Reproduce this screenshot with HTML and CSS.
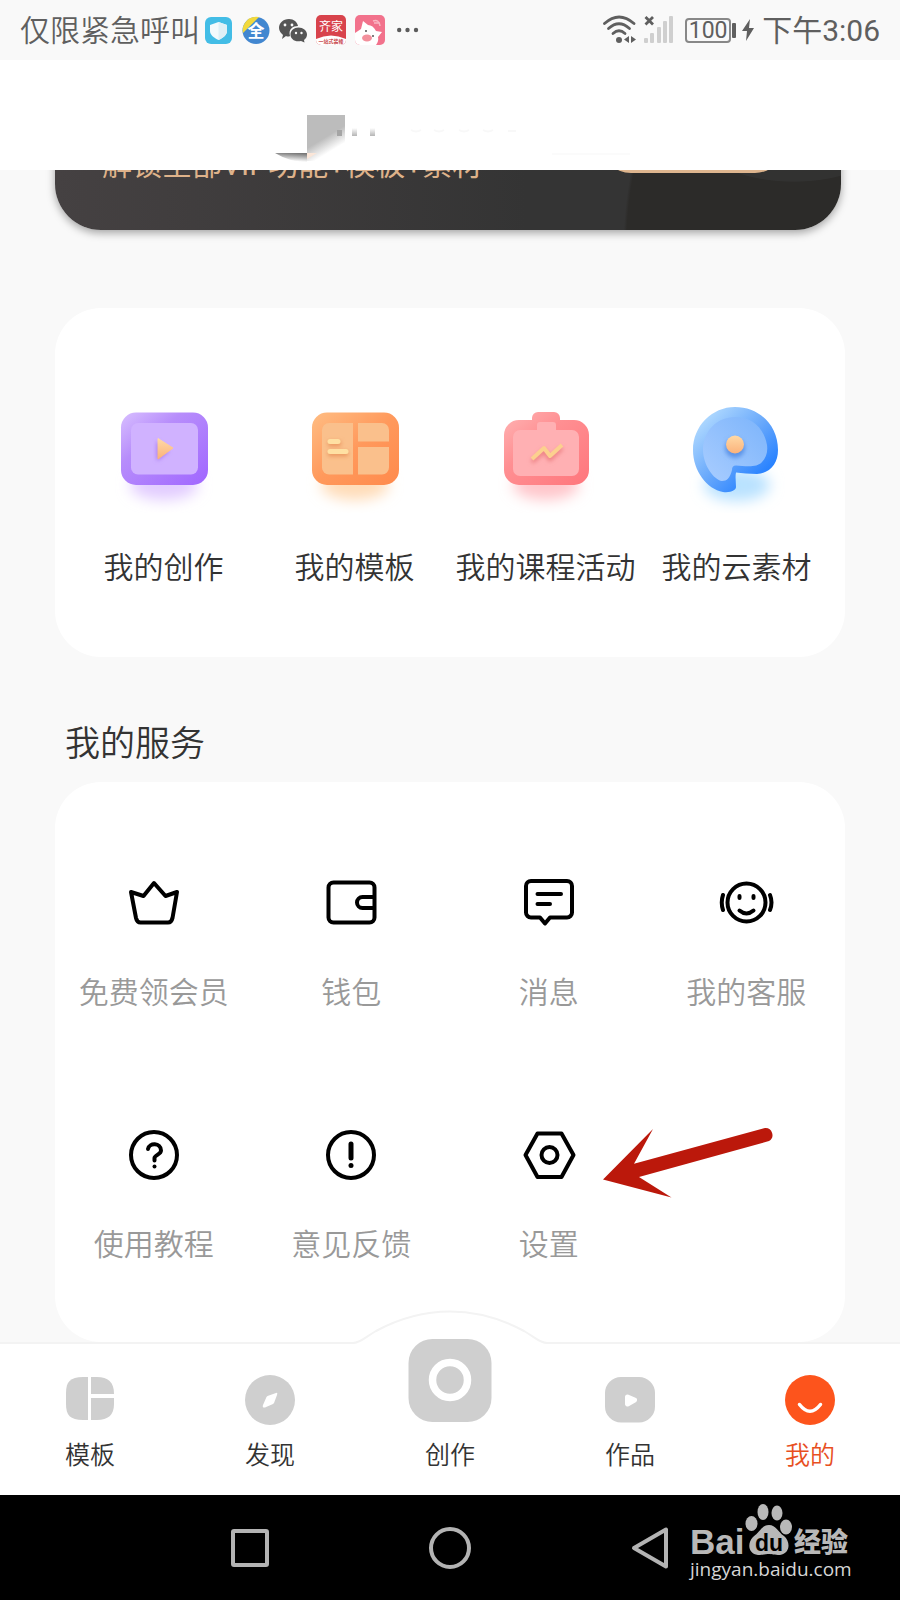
FILE: index.html
```html
<!DOCTYPE html>
<html lang="zh-CN">
<head>
    <meta charset="UTF-8">
    <meta name="viewport" content="width=device-width, initial-scale=1.0">
    <title>我的</title>
    <link rel="stylesheet" href="styles.css">
</head>
<body>
    <div class="status-bar">
        <span class="carrier">仅限紧急呼叫</span>
        <div class="notices">
            <svg width="28" height="30" viewBox="0 0 28 30">
                <rect x="0" y="2" width="27" height="27" rx="6" fill="#43bde6"/>
                <path d="M13.500 7 L22 10 V16 C22 20 18 23 13.500 25 C9 23 5 20 5 16 V10Z" fill="#f4fafc"/>
                <path d="M13.500 7 L22 10 V16 C22 20 18 23 13.500 25Z" fill="#dff0f6"/>
            </svg>
            <svg width="28" height="30" viewBox="0 0 28 30">
                <circle cx="14" cy="15.500" r="13.500" fill="#4287d0"/>
                <path d="M1 18 A13.500 13.500 0 0 1 17 2Z" fill="#f2d93c"/>
                <text x="14" y="22" class="icon-text" font-size="17" fill="#fff">全</text>
            </svg>
            <svg width="28" height="30" viewBox="0 0 28 30">
                <path d="M10 4 C4 4 0 8 0 13 C0 16 2 18 4 20 L3 24 L7 21 Q9 22 11 21 C9 14 14 11 19 11 C18 7 15 4 10 4Z" fill="#555"/>
                <path d="M19.500 12.500 C15 12.500 11.500 15.500 11.500 19.500 C11.500 24 16 27.500 22 26 L25.500 27.500 L25 25 C27 23.500 28 21.500 28 19.500 C28 15.500 24 12.500 19.500 12.500Z" fill="#555"/>
                <g fill="#f9f9f9"><circle cx="6" cy="10" r="1.400"/><circle cx="13" cy="10" r="1.400"/><circle cx="17" cy="18" r="1.200"/><circle cx="22.500" cy="18" r="1.200"/></g>
            </svg>
            <svg width="30" height="30" viewBox="0 0 30 30">
                <rect width="30" height="30" rx="5" fill="#d8434c"/>
                <path d="M0 24 Q15 17 30 24 V25 a5 5 0 0 1 -5 5 H5 a5 5 0 0 1 -5 -5Z" fill="#fff"/>
                <text x="15" y="16" class="icon-text thin" font-size="12" fill="#fff">齐家</text>
                <text x="15" y="28" class="icon-text" font-size="5" fill="#c63c44">一站式装修</text>
            </svg>
            <svg width="30" height="30" viewBox="0 0 30 30">
                <rect width="30" height="30" rx="5" fill="#f2728c"/>
                <path d="M0 18 L6 14 L8 6 L13 10 Q18 10 21 16 L27 17 L23 22 Q24 26 21 30 H5 a5 5 0 0 1 -5 -5Z" fill="#fff"/>
                <ellipse cx="12" cy="23" rx="5" ry="3.500" fill="#f3909c"/>
                <g fill="#555"><circle cx="11" cy="16" r="1"/><circle cx="18" cy="21" r="1"/></g>
                <path d="M18 6 Q24 4 25 11 M19 8 L25 8" stroke="#f9b8c4" stroke-width="1.500" fill="none"/>
            </svg>
            <svg class="more" width="22" height="30" viewBox="0 0 22 30">
                <g fill="#5c5c5c"><circle cx="2.200" cy="15" r="2.200"/><circle cx="10.500" cy="15" r="2.200"/><circle cx="19" cy="15" r="2.200"/></g>
            </svg>
        </div>
        <div class="signals">
            <svg width="70" height="30" viewBox="0 0 70 30">
                <g fill="none" stroke="#5f5f5f" stroke-width="2.800" stroke-linecap="round">
                    <path d="M1.500 8.500 Q16 -4.500 31 8.500"/>
                    <path d="M5.500 13.500 Q16 4 26.500 13.500"/>
                    <path d="M10 18.500 Q16 13 22 18.500"/>
                </g>
                <circle cx="16" cy="25" r="3" fill="#5f5f5f"/>
                <path d="M26 21 V28 L21 24.500Z M28 21 L33 24.500 L28 28Z" fill="#5f5f5f"/>
                <path d="M42.500 2 L50 9.500 M50 2 L42.500 9.500" stroke="#5f5f5f" stroke-width="2.800"/>
                <g fill="#cfcfcf"><rect x="41" y="23" width="4" height="5" rx="1"/><rect x="47" y="18" width="4" height="10" rx="1"/><rect x="54" y="12" width="4" height="16" rx="1"/><rect x="60" y="6" width="4" height="22" rx="1"/><rect x="66" y="1" width="4" height="27" rx="1"/></g>
            </svg>
            <span class="battery">100</span>
            <svg class="bolt" width="12" height="24" viewBox="0 0 12 24">
                <path d="M8 1 L0 13 H5 L4 23 L12 10 H7Z" fill="#5f5f5f"/>
            </svg>
            <span class="clock">下午3:06</span>
        </div>
    </div>

    <header>
        <svg width="360" height="110" viewBox="0 0 360 110">
            <defs>
                <linearGradient id="fold" x1="0.2" y1="0" x2="0.7" y2="1">
                    <stop offset="0" stop-color="#bcbcbc"/>
                    <stop offset=".5" stop-color="#bcbcbc"/>
                    <stop offset=".8" stop-color="#fff"/>
                </linearGradient>
                <linearGradient id="curl" x1="0.6" y1="0" x2="0.4" y2="1">
                    <stop offset="0" stop-color="#777"/>
                    <stop offset=".8" stop-color="#fff"/>
                </linearGradient>
                <linearGradient id="stub" x1="0" y1="0" x2="0" y2="1">
                    <stop offset="0" stop-color="#fff"/>
                    <stop offset="1" stop-color="#b5b5b5"/>
                </linearGradient>
            </defs>
            <rect x="37" y="55" width="38" height="46" fill="url(#fold)"/>
            <path d="M5 93 H37 V103 Q18 101 5 93Z" fill="url(#curl)"/>
            <path d="M37 93 H47 L37 99Z" fill="#fbe6d8"/>
            <path d="M67 70 H72 V76 H67Z" fill="#a5a5a5"/>
            <g fill="url(#stub)"><rect x="82" y="68" width="5" height="8"/><rect x="100" y="68" width="5" height="8"/></g>
            <path d="M141 70 q5 3 10 0 M164 70 q5 3 10 0 M189 70 q5 3 10 0 M213 70 q5 3 10 0 M238 71 h8" fill="none" stroke="#f8f8f8" stroke-width="2"/>
            <path d="M282 94 H360" stroke="#fbfbfb" stroke-width="2"/>
        </svg>
    </header>

    <main>
        <section class="vip-banner">
            <p>解锁全部VIP功能+模板+素材</p>
            <button class="vip-btn" aria-label="开通VIP"></button>
        </section>

        <section class="card assets">
            <a href="#">
                <svg width="100" height="110" viewBox="0 0 100 110">
                    <defs>
                        <linearGradient id="purple" x1="0" y1="0" x2="1" y2="1">
                            <stop offset="0" stop-color="#d8bfff"/>
                            <stop offset=".35" stop-color="#b78dfb"/>
                            <stop offset="1" stop-color="#a066ff"/>
                        </linearGradient>
                        <linearGradient id="gold" x1="0" y1="0" x2="0" y2="1">
                            <stop offset="0" stop-color="#ffd9a6"/>
                            <stop offset="1" stop-color="#fbb27a"/>
                        </linearGradient>
                        <filter id="soft" x="-50%" y="-100%" width="200%" height="300%"><feGaussianBlur stdDeviation="7"/></filter>
                        <filter id="near" x="-40%" y="-60%" width="180%" height="220%"><feGaussianBlur stdDeviation="2"/></filter>
                    </defs>
                    <ellipse cx="50" cy="82" rx="34" ry="15" fill="#e2ccff" filter="url(#soft)"/>
                    <rect x="7" y="9.500" width="87" height="72.500" rx="15" fill="url(#purple)"/>
                    <rect x="17" y="20" width="67" height="51.500" rx="7" fill="#d0b2ff"/>
                    <path d="M43 38 L55 48 L43 58Z" fill="#a273ee" filter="url(#near)"/>
                    <path d="M44 35.500 L59 45 L44 56Z" fill="url(#gold)" stroke="url(#gold)" stroke-linejoin="round"/>
                </svg>
                <span>我的创作</span>
            </a>
            <a href="#">
                <svg width="100" height="110" viewBox="0 0 100 110">
                    <defs>
                        <linearGradient id="orange" x1="0" y1="0" x2="1" y2="1">
                            <stop offset="0" stop-color="#ffbd83"/>
                            <stop offset=".5" stop-color="#ff995c"/>
                            <stop offset="1" stop-color="#ff8a4c"/>
                        </linearGradient>
                    </defs>
                    <ellipse cx="50" cy="82" rx="34" ry="15" fill="#ffdcb8" filter="url(#soft)"/>
                    <rect x="7" y="9.500" width="87" height="72.500" rx="15" fill="url(#orange)"/>
                    <g fill="#fac08c">
                        <path d="M24 20 H48 V71.500 H24 a7 7 0 0 1 -7 -7 V27 a7 7 0 0 1 7 -7Z"/>
                        <path d="M53 20 H77 a7 7 0 0 1 7 7 V38.500 H53Z"/>
                        <path d="M53 44 H84 V64.500 a7 7 0 0 1 -7 7 H53Z"/>
                    </g>
                    <g fill="#e8935c" filter="url(#near)"><rect x="23" y="38" width="13" height="5"/><rect x="23" y="48" width="20" height="5"/></g>
                    <g fill="#ffe0a3"><rect x="22.500" y="36" width="13" height="5" rx="2.500"/><rect x="22.500" y="46" width="21" height="5" rx="2.500"/></g>
                </svg>
                <span>我的模板</span>
            </a>
            <a href="#">
                <svg width="100" height="110" viewBox="0 0 100 110">
                    <defs>
                        <linearGradient id="red" x1="0" y1="0" x2="1" y2="1">
                            <stop offset="0" stop-color="#ffb4b4"/>
                            <stop offset=".4" stop-color="#ff8f92"/>
                            <stop offset="1" stop-color="#ff767c"/>
                        </linearGradient>
                    </defs>
                    <ellipse cx="50" cy="82" rx="33" ry="15" fill="#ffc6cb" filter="url(#soft)"/>
                    <path d="M23 17 H36 V15 a6 6 0 0 1 6 -6 H58 a6 6 0 0 1 6 6 V17 H78 a15 15 0 0 1 15 15 V67 a15 15 0 0 1 -15 15 H23 a15 15 0 0 1 -15 -15 V32 a15 15 0 0 1 15 -15Z" fill="url(#red)"/>
                    <path d="M24 27 H41 V22 a3 3 0 0 1 3 -3 H57 a3 3 0 0 1 3 3 V27 H76 a7 7 0 0 1 7 7 V66 a7 7 0 0 1 -7 7 H24 a7 7 0 0 1 -7 -7 V34 a7 7 0 0 1 7 -7Z" fill="#ffb0b3"/>
                    <path d="M36 59 L48 48 L54 56 L66 45" fill="none" stroke="#ec7f80" stroke-width="4" filter="url(#near)"/>
                    <path d="M36 56 L48 45 L54 53 L66 42" fill="none" stroke="#fcd08f" stroke-width="4" stroke-linejoin="round"/>
                </svg>
                <span>我的课程活动</span>
            </a>
            <a href="#">
                <svg width="100" height="110" viewBox="0 0 100 110">
                    <defs>
                        <linearGradient id="blue" x1="0" y1="0" x2="1" y2="1">
                            <stop offset=".1" stop-color="#b4dcff"/>
                            <stop offset=".5" stop-color="#68a8fb"/>
                            <stop offset=".8" stop-color="#2a83ff"/>
                        </linearGradient>
                        <linearGradient id="sky" x1="1" y1="0" x2="0" y2="1">
                            <stop offset="0" stop-color="#7cb4fb"/>
                            <stop offset="1" stop-color="#a9cdff"/>
                        </linearGradient>
                    </defs>
                    <ellipse cx="50" cy="82" rx="33" ry="16" fill="#b9e2ff" filter="url(#soft)"/>
                    <path d="M48 4 C25 4 6 23 6 47 C6 68 20 86 36 89 C44 90 49 87 49 84 C49 79 48 74 49 69.500 C55 70 62 71 70 71 C84 70 91 60 91 47 C91 22 72 4 48 4Z" fill="url(#blue)"/>
                    <path d="M48 14 C30 14 16 28 16 47 C16 62 27 77 35 78 C40 78 43 75 45 67 C45 64 46 62.500 49 62.500 C58 63 70 65 75 59 C79 55 81 49 80 42 C77 25 65 14 48 14Z" fill="url(#sky)"/>
                    <circle cx="48" cy="45" r="10" fill="#5c93e6" filter="url(#near)"/>
                    <circle cx="48" cy="41.500" r="9" fill="url(#gold)"/>
                </svg>
                <span>我的云素材</span>
            </a>
        </section>

        <h2>我的服务</h2>
        <section class="card services">
            <a href="#">
                <svg width="60" height="60" viewBox="0 0 60 60">
                    <path d="M7 19 L19.500 23 L30 10 L41.500 23 L53 19 L48.500 45 Q47.500 49.500 44 49.500 H16.500 Q13 49.500 12 45Z"/>
                </svg>
                <span>免费领会员</span>
            </a>
            <a href="#">
                <svg width="60" height="60" viewBox="0 0 60 60">
                    <rect x="7.500" y="9.500" width="46" height="40" rx="5"/>
                    <path d="M53 24 H41.500 a5.500 5.500 0 0 0 0 11 H53"/>
                </svg>
                <span>钱包</span>
            </a>
            <a href="#">
                <svg width="60" height="60" viewBox="0 0 60 60">
                    <path d="M12 8 H48 a5 5 0 0 1 5 5 V39.500 a5 5 0 0 1 -5 5 H31 L26 50.500 L21 44.500 H12 a5 5 0 0 1 -5 -5 V13 a5 5 0 0 1 5 -5Z"/>
                    <path d="M18.500 21 H42 M18.500 31 H31"/>
                </svg>
                <span>消息</span>
            </a>
            <a href="#">
                <svg width="60" height="60" viewBox="0 0 60 60">
                    <circle cx="30.500" cy="29.500" r="19"/>
                    <path d="M23.500 23 V25 M37.500 23 V25"/>
                    <path d="M23.500 37.500 Q30.500 43.500 37.500 37.500"/>
                    <path d="M7 22 Q4.500 29.500 7 37 M54 22 Q57 29.500 54 37"/>
                </svg>
                <span>我的客服</span>
            </a>
            <a href="#">
                <svg width="60" height="60" viewBox="0 0 60 60">
                    <circle cx="30" cy="30" r="23"/>
                    <path d="M24 24 C25 17.500 37 17.500 37 25.500 C37 29.500 30.500 30 30.500 33 V35.500"/>
                    <circle cx="30.500" cy="41.500" r="2" class="dot"/>
                </svg>
                <span>使用教程</span>
            </a>
            <a href="#">
                <svg width="60" height="60" viewBox="0 0 60 60">
                    <circle cx="30" cy="30" r="23"/>
                    <path d="M30 19 V33" stroke-width="5"/>
                    <circle cx="30" cy="40.500" r="2.500" class="dot"/>
                </svg>
                <span>意见反馈</span>
            </a>
            <a href="#">
                <svg width="60" height="60" viewBox="0 0 60 60">
                    <path d="M6.500 30 L18.500 8.500 H42.500 L54.500 30 L42.500 52 H18.500Z"/>
                    <circle cx="30.500" cy="30" r="8"/>
                </svg>
                <span>设置</span>
                <svg class="pointer" width="172" height="72" viewBox="0 0 172 72">
                    <path d="M0 52.500 L50 2 L31 36.700 L162 1 A7 7 0 0 1 166 14 L36 50 L68.500 70.500Z"/>
                </svg>
            </a>
        </section>
    </main>

    <nav class="tab-bar">
        <svg class="bump" width="200" height="36" viewBox="0 0 200 36">
            <path d="M0 33 H3 C10 33 14 28 26 21 C50 8 75 1.500 100 1.500 C125 1.500 150 8 174 21 C186 28 190 33 197 33 H200 V36 H0Z" fill="#fff"/>
            <path d="M0 33 H3 C10 33 14 28 26 21 C50 8 75 1.500 100 1.500 C125 1.500 150 8 174 21 C186 28 190 33 197 33 H200" fill="none" stroke="#f3f3f3" stroke-width="2"/>
        </svg>
        <a href="#">
            <svg width="50" height="50" viewBox="0 0 50 50" fill="#cfcfcf">
                <path d="M23 2 V45 H18 C5 45 1 40 1 29 V18 C1 7 5 2 18 2Z"/>
                <path d="M26 2 H32 C43 2 49 7 49 19 H26Z"/>
                <path d="M26 23 H49 V29 C49 40 43 45 32 45 H26Z"/>
            </svg>
            <span>模板</span>
        </a>
        <a href="#">
            <svg width="50" height="50" viewBox="0 0 50 50">
                <circle cx="25" cy="25" r="25" fill="#cfcfcf"/>
                <path d="M31 18 Q33 17 32 20 L29 28 L28 29 L20 32.500 Q17 33 18 30 L21.500 22 L22.500 21Z" fill="#fff"/>
            </svg>
            <span>发现</span>
        </a>
        <a href="#" class="create">
            <svg width="84" height="86" viewBox="0 0 84 86">
                <rect x="0.500" y="0" width="83" height="83" rx="24" fill="#cfcfcf"/>
                <circle cx="42" cy="41" r="17.500" fill="none" stroke="#fff" stroke-width="7.500"/>
            </svg>
            <span>创作</span>
        </a>
        <a href="#">
            <svg width="50" height="50" viewBox="0 0 50 50">
                <rect x="0" y="2" width="50" height="45.500" rx="16" fill="#cfcfcf"/>
                <path d="M22.500 22 L29.500 25 L22.500 29Z" fill="#fff" stroke="#fff" stroke-width="5" stroke-linejoin="round"/>
            </svg>
            <span>作品</span>
        </a>
        <a href="#" class="active">
            <svg width="50" height="50" viewBox="0 0 50 50">
                <circle cx="25" cy="25" r="25" fill="#fd541c"/>
                <path d="M14.500 29.500 Q25 43 35.500 29.500" fill="none" stroke="#fff" stroke-width="3.500" stroke-linecap="round"/>
            </svg>
            <span>我的</span>
        </a>
    </nav>

    <footer class="system-bar">
        <button aria-label="最近任务">
            <svg width="44" height="44" viewBox="0 0 44 44"><rect x="5" y="5" width="34" height="34" rx="1"/></svg>
        </button>
        <button aria-label="主页">
            <svg width="44" height="44" viewBox="0 0 44 44"><circle cx="22" cy="22" r="19"/></svg>
        </button>
        <button aria-label="返回">
            <svg width="44" height="44" viewBox="0 0 44 44"><path d="M6 22 L38 3.500 V40.500Z"/></svg>
        </button>
        <svg class="watermark" width="164" height="82" viewBox="0 0 164 82">
            <g fill="#b8b8b8">
                <text x="2" y="52" class="logo-latin" font-size="35">Bai</text>
                <ellipse cx="63.500" cy="21.500" rx="6" ry="7.500"/>
                <ellipse cx="75" cy="10" rx="5.500" ry="8"/>
                <ellipse cx="89" cy="11" rx="5.500" ry="7.500"/>
                <ellipse cx="98" cy="25" rx="6" ry="7.500"/>
                <path d="M81 23 C88 23 90 30 96 34 C103 40 102 52 92 53 C86 53 84 52 81 52 C78 52 76 53 70 53 C60 52 59 41 65 35 C72 30 74 23 81 23Z"/>
                <text x="106" y="50" class="logo-cn" font-size="27">经验</text>
            </g>
            <text x="67" y="49" class="logo-latin" font-size="23" fill="#000">du</text>
            <text x="2" y="74" class="logo-url" font-size="19" fill="#d6d6d6">jingyan.baidu.com</text>
        </svg>
    </footer>
</body>
</html>
```
FILE: styles.css
```css
* {
    box-sizing: border-box;
}
body {
    margin: 0;
    min-height: 100vh;
    display: flex;
    flex-direction: column;
    background-color: #f9f9f9;
    font-family: Roboto, "Noto Sans CJK SC", sans-serif;
    font-weight: 350;
    color: #333;
}
svg {
    display: block;
    flex-shrink: 0;
}
a {
    color: inherit;
    text-decoration: none;
}
button {
    padding: 0;
    border: none;
    background: none;
    cursor: pointer;
}

/* phone status bar */
.status-bar {
    display: flex;
    align-items: center;
    height: 60px;
    padding: 0 20px;
    color: #5f5f5f;
    font-size: 30px;
    line-height: 40px;
    white-space: nowrap;
}
.carrier, .clock {
    padding-top: 2px;
}
.notices {
    display: flex;
    gap: 9px;
    margin-left: 5px;
}
.notices .more {
    margin-left: 3px;
}
.signals {
    display: flex;
    align-items: center;
    margin-left: auto;
}
.battery {
    position: relative;
    width: 46px;
    height: 25px;
    margin: 0 11px 0 12px;
    border: 2px solid #888;
    border-radius: 4px;
    font-size: 23px;
    font-weight: 400;
    line-height: 22px;
    text-align: center;
}
.battery::after {
    content: "";
    position: absolute;
    top: 3px;
    right: -7px;
    width: 4px;
    height: 15px;
    border-radius: 1px;
    background-color: #5f5f5f;
}
.bolt {
    margin-right: 8px;
}
.clock {
    font-weight: 400;
}
.icon-text {
    font-family: "Noto Sans CJK SC", sans-serif;
    font-weight: 700;
    text-anchor: middle;
}
.thin {
    font-weight: 400;
}

header {
    position: sticky;
    top: 0;
    z-index: 2;
    display: flex;
    justify-content: center;
    height: 110px;
    background-color: white;
}
main {
    flex: 1;
    padding: 0 55px;
}

/* banner is scrolled half under the header */
.vip-banner {
    display: flex;
    justify-content: space-between;
    align-items: flex-start;
    height: 120px;
    margin: -60px 4px 78px 0;
    padding: 3px 56px 0 47px;
    border-radius: 0 0 46px 46px;
    background:
        radial-gradient(ellipse 90px 40px at 94% 32px, #323231 98%, transparent 100%),
        radial-gradient(ellipse 312px 360px at 112% 140px, #2c2b29 99%, transparent 100%),
        linear-gradient(90deg, #454142, #343434 60%);
    box-shadow: 0 3px 8px rgba(0, 0, 0, 0.35);
}
.vip-banner p {
    margin: 37px 0 0;
    color: #deb28a;
    font-size: 30px;
    font-weight: 400;
    line-height: 30px;
    white-space: nowrap;
}
.vip-btn {
    width: 184px;
    height: 60px;
    border-radius: 30px;
    background-color: #deb58e;
}

.card {
    display: grid;
    grid-template-columns: repeat(4, 1fr);
    border-radius: 46px;
    background-color: white;
}
.card a {
    display: flex;
    flex-direction: column;
    align-items: center;
    font-size: 30px;
    line-height: 30px;
    white-space: nowrap;
}
.assets {
    padding: 95px 13px 74px;
}
.assets a {
    gap: 40px;
}
h2 {
    margin: 68px 0 17px 10px;
    font-size: 35px;
    font-weight: 350;
    line-height: 40px;
}
.services {
    row-gap: 117px;
    padding: 91px 0 82px;
}
.services a {
    position: relative;
    gap: 45px;
    color: #999;
}
.services svg {
    fill: none;
    stroke: #000;
    stroke-width: 4;
    stroke-linecap: round;
    stroke-linejoin: round;
}
.services .dot {
    fill: #000;
    stroke: none;
}
.services .pointer {
    position: absolute;
    top: 2px;
    left: 153px;
    z-index: 1;
    fill: #bb180b;
    stroke: none;
}

.tab-bar {
    position: relative;
    display: grid;
    grid-template-columns: repeat(5, 1fr);
    padding: 31px 0 24px;
    border-top: 2px solid #f3f3f3;
    background-color: white;
}
.tab-bar a {
    position: relative;
    display: flex;
    flex-direction: column;
    align-items: center;
    gap: 16px;
    font-size: 25px;
    line-height: 30px;
}
.tab-bar .create svg {
    margin-top: -36px;
}
.tab-bar .active {
    color: #e8501f;
}
.bump {
    position: absolute;
    top: -34px;
    left: 50%;
    transform: translateX(-50%);
}

.system-bar {
    position: relative;
    display: flex;
    justify-content: center;
    height: 105px;
    background-color: #000;
}
.system-bar button {
    display: flex;
    justify-content: center;
    align-items: center;
    width: 200px;
}
.system-bar button svg {
    fill: none;
    stroke: #b3b3b3;
    stroke-width: 4;
    stroke-linejoin: round;
}
.watermark {
    position: absolute;
    top: 7px;
    right: 48px;
}
.logo-latin {
    font-family: "Liberation Sans", Arial, sans-serif;
    font-weight: 700;
}
.logo-cn {
    font-family: "Noto Sans CJK SC", sans-serif;
    font-weight: 900;
}
.logo-url {
    font-family: "Open Sans", sans-serif;
    font-weight: 400;
}
```
